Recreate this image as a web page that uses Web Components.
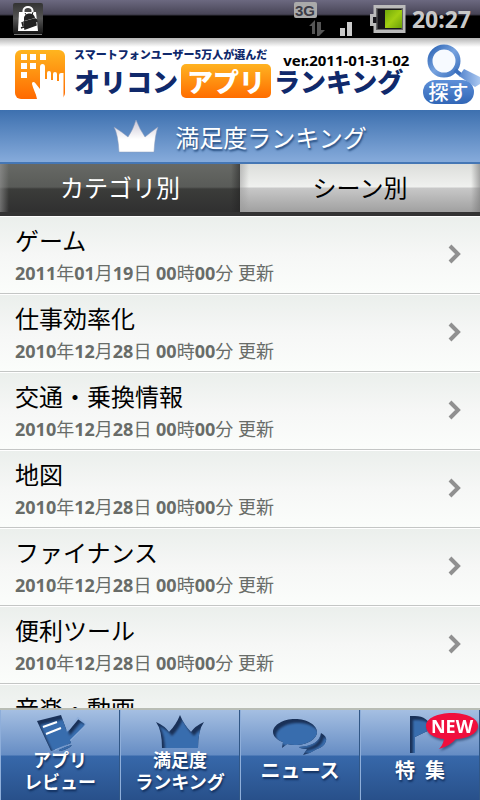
<!DOCTYPE html>
<html lang="ja">
<head>
<meta charset="utf-8">
<meta name="viewport" content="width=device-width, initial-scale=1">
<title>オリコン アプリランキング</title>
<style>
  html, body {
    height: 100%;
    margin: 0;
  }

  body {
    display: flex;
    flex-direction: column;
    overflow: hidden;
    background: #f4f6f5;
    color: #000;
    font-family: "Noto Sans", "Noto Sans CJK JP", sans-serif;
  }
</style>
</head>
<body>
  <status-bar time="20:27"></status-bar>
  <app-header version="ver.2011-01-31-02"></app-header>
  <page-title>満足度ランキング</page-title>
  <tab-bar>
    <tab-button selected>カテゴリ別</tab-button>
    <tab-button>シーン別</tab-button>
  </tab-bar>
  <ranking-list>
    <ranking-item date="2011年01月19日 00時00分 更新">ゲーム</ranking-item>
    <ranking-item date="2010年12月28日 00時00分 更新">仕事効率化</ranking-item>
    <ranking-item date="2010年12月28日 00時00分 更新">交通・乗換情報</ranking-item>
    <ranking-item date="2010年12月28日 00時00分 更新">地図</ranking-item>
    <ranking-item date="2010年12月28日 00時00分 更新">ファイナンス</ranking-item>
    <ranking-item date="2010年12月28日 00時00分 更新">便利ツール</ranking-item>
    <ranking-item date="">音楽・動画</ranking-item>
  </ranking-list>
  <nav-bar>
    <nav-item icon="review">アプリ<br>レビュー</nav-item>
    <nav-item icon="crown">満足度<br>ランキング</nav-item>
    <nav-item icon="news" large>ニュース</nav-item>
    <nav-item icon="flag" large badge="NEW">特&ensp;集</nav-item>
  </nav-bar>

<script>
/**
 * Phone status bar: notification, network, battery and clock.
 */
class StatusBar extends HTMLElement {
    constructor() {
        super();
        const shadow = this.attachShadow({ mode: 'open' });
        shadow.innerHTML = `
      <style>
        :host {
          display: flex;
          flex: none;
          align-items: center;
          height: 38px;
          padding: 0 9px 0 12px;
          background: linear-gradient(#6c6980, #484557 14px, #34323e 15px, #000 16px);
        }
        svg { display: block; flex: none; }
        .spacer { flex: 1; }
        .network { margin-right: 17px; }
        .battery { margin-right: 6px; }
        time {
          color: #c9c9c9;
          font-size: 23px;
          font-weight: bold;
          line-height: 38px;
        }
      </style>
      <svg width="32" height="38" viewBox="0 0 32 38" aria-hidden="true">
        <defs>
          <linearGradient id="tile" x2="0" y2="1"><stop stop-color="#333"/><stop offset=".5" stop-color="#555"/><stop offset="1" stop-color="#151515"/></linearGradient>
        </defs>
        <rect x="1" y="3" width="30" height="31" rx="2" fill="url(#tile)"/>
        <path d="M2 34.500h28" stroke="#777"/>
        <path d="M11.500 13v-2.500a4.500 3.500 0 0 1 9 0V13" fill="none" stroke="#fff" stroke-width="2"/>
        <path d="M7 12h17l2 19H6z" fill="#fff"/>
        <path d="M12 18c0-5 10-7 11 0l-11 3z" fill="#222"/>
        <path d="M13 13l2 3M21 12l-1 3" stroke="#222"/>
        <path d="M12 22l11-3 1 6-11 4zM10 22l1 4M9 28l5-2M24 19l1 3" fill="#222" stroke="#222" stroke-width="1.500"/>
      </svg>
      <span class="spacer"></span>
      <svg class="network" width="59" height="38" viewBox="0 0 59 38" role="img" aria-label="3G">
        <rect y="2" width="23" height="16" rx="2" fill="#aaa"/>
        <text x="11" y="16" text-anchor="middle" font-size="15" font-weight="bold" font-family="Liberation Sans, sans-serif" fill="#3c3c46">3G</text>
        <path d="M15 26l6-6v14h-3v-8zM23 22h4v8h4l-6 6h-2z" fill="#555"/>
        <path d="M46 28h5v8h-5zM53 22h5v14h-5z" fill="#ccc"/>
      </svg>
      <svg class="battery" width="36" height="38" viewBox="0 0 36 38" role="img" aria-label="Battery">
        <defs>
          <linearGradient id="charge" x2="1" y2="1"><stop stop-color="#6fa80a"/><stop offset=".5" stop-color="#a2cf12"/><stop offset="1" stop-color="#6a9f08"/></linearGradient>
        </defs>
        <path d="M5 6.500h29v25H5v-7H1.500v-9H5z" fill="#16151a" stroke="#bbb" stroke-width="3"/>
        <path d="M7 8.500h25v21H7z" fill="none" stroke="#666"/>
        <path d="M15 10h17v18H15z" fill="url(#charge)"/>
      </svg>
      <time></time>`;
        shadow.querySelector('time').textContent = this.getAttribute('time');
    }
}
customElements.define('status-bar', StatusBar);

/**
 * Header with the service logo and the search button.
 */
class AppHeader extends HTMLElement {
    constructor() {
        super();
        const shadow = this.attachShadow({ mode: 'open' });
        shadow.innerHTML = `
      <style>
        :host {
          display: flex;
          flex: none;
          align-items: flex-start;
          justify-content: space-between;
          height: 72px;
          background: linear-gradient(#b4b4b4, #fff 9px);
          white-space: nowrap;
        }
        .logo {
          display: flex;
          gap: 9px;
          padding: 11px 0 0 15px;
          color: #10296b;
          font-family: "Noto Sans CJK JP", sans-serif;
          font-weight: 900;
        }
        .logo svg { flex: none; }
        .top { display: flex; gap: 16px; height: 15px; }
        .tagline { font-size: 11px; line-height: 11px; }
        .version {
          color: #000;
          font: bold 15px/22px "Noto Sans", sans-serif;
        }
        h1 {
          display: flex;
          gap: 3px;
          align-items: center;
          margin: 0;
          font-size: 26px;
          font-weight: 900;
          line-height: 34px;
        }
        .app {
          padding: 0 6px;
          border-radius: 5px;
          background: linear-gradient(#ffb321, #ff6d00);
          color: #fff;
        }
        button {
          position: relative;
          flex: none;
          width: 58px;
          height: 68px;
          padding: 0;
          border: 0;
          background: none;
        }
        button svg { display: block; }
        .label {
          position: absolute;
          left: 1px;
          bottom: 2px;
          width: 51px;
          border-radius: 12px;
          background: linear-gradient(#5d8fd8, #3166b6);
          color: #fff;
          font: 500 20px/24px "Noto Sans CJK JP", sans-serif;
        }
      </style>
      <div class="logo">
        <svg width="50" height="50" viewBox="0 0 50 50" aria-hidden="true">
          <defs>
            <linearGradient id="orange" x2="0" y2="1"><stop stop-color="#ffb51f"/><stop offset="1" stop-color="#ff6900"/></linearGradient>
          </defs>
          <rect y="1" width="50" height="49" rx="6" fill="url(#orange)"/>
          <path d="M6 5h6v6H6zM15 5h6v6h-6zM25 5h6v6h-6zM6 14h6v6H6zM15 14h6v6h-6zM6 23h6v6H6z" fill="#fff"/>
          <path d="M25 18q0-3 2.500-3t2.500 3v12h2v-6q0-2 2-2t2 2v7h2v-6q0-2 2-2t2 2v7h2v-6q0-2 2-2h2.500V50H22c-1-6-4-10-5-15 0-3 3-2 4 0l4 5z" fill="#fff"/>
        </svg>
        <div>
          <div class="top">
            <span class="tagline">スマートフォンユーザー5万人が選んだ</span>
            <span class="version"></span>
          </div>
          <h1><span>オリコン</span><span class="app">アプリ</span><span>ランキング</span></h1>
        </div>
      </div>
      <button type="button">
        <svg width="58" height="68" viewBox="0 0 58 68" aria-hidden="true">
          <defs>
            <linearGradient id="ring" x2="1" y2="1"><stop stop-color="#2b63b4"/><stop offset=".5" stop-color="#78a3df"/><stop offset="1" stop-color="#3a6fbd"/></linearGradient>
            <linearGradient id="grip" x2="1" y2="0"><stop stop-color="#5484cd"/><stop offset="1" stop-color="#abc8f0"/></linearGradient>
          </defs>
          <circle cx="22" cy="23" r="14" fill="#f7faff" stroke="url(#ring)" stroke-width="5"/>
          <path d="M33 32l6 5" stroke="#3a6fbd" stroke-width="4"/>
          <path d="M42 31l16 8v7l-5 3-16-11z" fill="url(#grip)"/>
        </svg>
        <span class="label">探す</span>
      </button>`;
        shadow.querySelector('.version').textContent = this.getAttribute('version');
    }
}
customElements.define('app-header', AppHeader);

/**
 * Blue heading with a crown.
 */
class PageTitle extends HTMLElement {
    constructor() {
        super();
        const shadow = this.attachShadow({ mode: 'open' });
        shadow.innerHTML = `
      <style>
        :host {
          display: block;
          flex: none;
          box-sizing: border-box;
          height: 54px;
          border-bottom: 2px solid #4577b5;
          background: linear-gradient(#3d70af, #86abdb);
        }
        h2 {
          display: flex;
          align-items: center;
          justify-content: center;
          gap: 16px;
          height: 52px;
          margin: 0;
          color: #fff;
          font-size: 24px;
          font-weight: 400;
          text-shadow: 1px 2px 2px #234a7c;
        }
      </style>
      <h2>
        <svg width="46" height="34" viewBox="0 0 46 34" aria-hidden="true">
          <defs>
            <linearGradient id="silver" x2="0" y2="1"><stop stop-color="#c9c5d4"/><stop offset=".6" stop-color="#fff"/></linearGradient>
          </defs>
          <path d="M1 8q8 5 14 10Q20 11 23 1q4 10 9 17 6-5 13-10-3 7-4 25H6Q5 15 1 8z" fill="url(#silver)" stroke="#8d9dbb" stroke-width=".5"/>
        </svg>
        <slot></slot>
      </h2>`;
    }
}
customElements.define('page-title', PageTitle);

/**
 * Row of equally wide tabs.
 */
class TabBar extends HTMLElement {
    constructor() {
        super();
        const shadow = this.attachShadow({ mode: 'open' });
        shadow.innerHTML = `
      <style>
        :host {
          display: flex;
          flex: none;
          border-bottom: 4px solid #333;
        }
      </style>
      <slot></slot>`;
        this.addEventListener('click', event => {
            const tab = event.target.closest('tab-button');
            if (!tab) return;
            for (const item of this.children) item.toggleAttribute('selected', item === tab);
        });
    }
}
customElements.define('tab-bar', TabBar);

class TabButton extends HTMLElement {
    constructor() {
        super();
        const shadow = this.attachShadow({ mode: 'open' });
        shadow.innerHTML = `
      <style>
        :host { display: block; flex: 1; }
        button {
          display: block;
          width: 100%;
          height: 48px;
          padding: 0;
          border: 0;
          background:
            linear-gradient(90deg, #9998, #fff0 9px, #fff0 calc(100% - 9px), #7779),
            linear-gradient(#dcdedb, #f0f1ef 23px, #c8c8c8 24px, #a0a0a0);
          color: #000;
          font: inherit;
          font-size: 24px;
          line-height: 48px;
        }
        :host([selected]) button {
          background:
            linear-gradient(90deg, #9999, #fff0 9px, #fff0 calc(100% - 9px), #2228),
            linear-gradient(#676965, #595b58 23px, #3b3c3a 25px, #303030);
          color: #fff;
        }
      </style>
      <button type="button"><slot></slot></button>`;
    }
}
customElements.define('tab-button', TabButton);

/**
 * Scrolling list of categories.
 */
class RankingList extends HTMLElement {
    constructor() {
        super();
        const shadow = this.attachShadow({ mode: 'open' });
        shadow.innerHTML = `
      <style>
        :host {
          display: block;
          flex: 1;
          min-height: 0;
          overflow-y: auto;
          scrollbar-width: none;
        }
      </style>
      <slot></slot>`;
    }
}
customElements.define('ranking-list', RankingList);

class RankingItem extends HTMLElement {
    constructor() {
        super();
        const shadow = this.attachShadow({ mode: 'open' });
        shadow.innerHTML = `
      <style>
        :host { display: block; }
        a {
          display: flex;
          align-items: center;
          justify-content: space-between;
          box-sizing: border-box;
          height: 78px;
          padding: 0 17px 0 15px;
          border-top: 1px solid #fff;
          border-bottom: 1px solid #c4c6c5;
          background: linear-gradient(#ebefec, #f6f7f6 50%, #fbfdfb);
          color: #000;
          text-decoration: none;
        }
        .name {
          font-size: 24px;
          line-height: 36px;
        }
        .date {
          min-height: 28px;
          color: #686c68;
          font-size: 18px;
          line-height: 28px;
        }
      </style>
      <a href="#">
        <div>
          <div class="name"><slot></slot></div>
          <div class="date"></div>
        </div>
        <svg width="16" height="22" viewBox="0 0 16 22" aria-hidden="true">
          <path d="M3 2l8 8-8 8" fill="none" stroke="#909090" stroke-width="4"/>
        </svg>
      </a>`;
        // Only the digits are bold.
        shadow.querySelector('.date').innerHTML = this.getAttribute('date').replace(/\d+/g, '<b>$&</b>');
    }
}
customElements.define('ranking-item', RankingItem);

/**
 * Bottom navigation.
 */
class NavBar extends HTMLElement {
    constructor() {
        super();
        const shadow = this.attachShadow({ mode: 'open' });
        shadow.innerHTML = `
      <style>
        :host { display: block; flex: none; }
        nav {
          display: flex;
          border-top: 2px solid #b9bdb5;
        }
      </style>
      <nav><slot></slot></nav>`;
    }
}
customElements.define('nav-bar', NavBar);

const navIcons = {
    review: `
      <path d="M4 6l24-6 10 28-20 8z"/>
      <path d="M26 26L45 3l8 6-20 20-10 5z" stroke="#8fafdb" stroke-width="2"/>
      <path d="M26 35q8-4 13-5-3 4-12 6z"/>
      <path class="line" d="M10 12l14-5M13 19l15-6"/>`,
    crown: '<path d="M3 7q9 4 13 10Q23 10 27 0q4 10 11 17 4-6 13-10-6 8-6 26H9Q9 15 3 7z"/>',
    news: `
      <path d="M48 18q6 3 5 8-2 6-9 8-6 4-14 6l4-6q-6 0-8-2 20-1 22-14z"/>
      <path d="M22 4c12 0 22 6 22 13s-10 13-22 13q-4 0-8-1l-5 4 1-6C4 25 0 21 0 17 0 10 10 4 22 4z"/>`,
    flag: '<path d="M17 1h5q13 0 17 13-9 4-17 8v16h-5z"/>'
};

class NavItem extends HTMLElement {
    constructor() {
        super();
        const badge = this.getAttribute('badge');
        const shadow = this.attachShadow({ mode: 'open' });
        shadow.innerHTML = `
      <style>
        :host { display: block; flex: 1; min-width: 0; }
        a {
          position: relative;
          display: flex;
          flex-direction: column;
          align-items: center;
          box-sizing: border-box;
          height: 90px;
          padding-top: 5px;
          border-left: 1px solid #8eaeda;
          border-right: 1px solid #315786;
          background: linear-gradient(#a5bfe2, #668dc4 45px, #3768aa 46px, #28508a);
          color: #fff;
          text-decoration: none;
        }
        .icon {
          display: block;
          height: 34px;
          overflow: visible;
        }
        .shade { fill: #1a3158; }
        .face { fill: #386dae; stroke: none; }
        .face path { stroke: none; }
        .line { fill: none; stroke: #fff; stroke-width: 2; }
        .shade .line, .face .line, .marks path:not(.line) { display: none; }
        .label {
          display: flex;
          align-items: center;
          height: 44px;
          font-size: 18px;
          font-weight: bold;
          line-height: 22px;
          text-align: center;
          text-shadow: 1px 2px 2px #12305f;
          white-space: nowrap;
        }
        :host([large]) .label { font-size: 20px; }
        .badge {
          position: absolute;
          top: 2px;
          right: 0;
          filter: drop-shadow(1px 2px 1px #1c345c99);
        }
      </style>
      <a href="#">
        <svg class="icon" width="54" height="34" viewBox="0 0 54 34" aria-hidden="true">
          <defs>
            <clipPath id="shape"></clipPath>
            <filter id="soft"><feGaussianBlur stdDeviation="1.200"/></filter>
          </defs>
          <g class="shade"></g>
          <g clip-path="url(#shape)"><g class="face" transform="translate(3 4)" filter="url(#soft)"></g></g>
          <g class="marks"></g>
        </svg>
        <span class="label"><span><slot></slot></span></span>
        ${badge ? `
        <svg class="badge" width="54" height="40" viewBox="0 0 54 40">
          <path d="M27 1c14 0 26 5 26 13S41 27 31 27q-6 7-17 10 4-4 5-10C8 26 1 21 1 14 1 6 13 1 27 1z" fill="#f00f3d"/>
          <text x="27" y="21" text-anchor="middle" font-size="18" font-weight="bold" fill="#fff">${badge}</text>
        </svg>` : ''}
      </a>`;
        // The icon is cut into the bar: a dark copy below, the face shifted inside it.
        const paths = navIcons[this.getAttribute('icon')];
        for (const layer of shadow.querySelectorAll('.shade, .face, .marks, clipPath')) {
            layer.innerHTML = paths;
        }
    }
}
customElements.define('nav-item', NavItem);
</script>
</body>
</html>
